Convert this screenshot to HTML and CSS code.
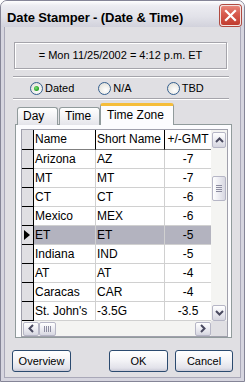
FILE: index.html
```html
<!DOCTYPE html>
<html>
<head>
<meta charset="utf-8">
<link rel="stylesheet" href="styles.css">
</head>
<body>
<div class="window">
  <div class="titlebar">
    <span class="title">Date Stamper - (Date &amp; Time)</span>
    <span class="close"><svg width="21" height="21" viewBox="0 0 21 21"><path d="M6 6 L15 15 M15 6 L6 15" stroke="#fff" stroke-width="2.2" stroke-linecap="square"/></svg></span>
  </div>
  <div class="client">
    <div class="display">= Mon 11/25/2002 = 4:12 p.m. ET</div>
    <div class="sep"></div>
    <div class="radios">
      <label class="radio r1"><span class="circle checked"></span>Dated</label>
      <label class="radio r2"><span class="circle"></span>N/A</label>
      <label class="radio r3"><span class="circle"></span>TBD</label>
    </div>
    <div class="sep sep2"></div>
    <div class="tabs">
      <div class="tab t-day">Day</div>
      <div class="tab t-time">Time</div>
      <div class="tab active">Time Zone</div>
    </div>
    <div class="panel">
      <div class="grid">
        <div class="gridmain">
          <div class="table">
            <div class="row head"><div class="rh"></div><div class="c">Name</div><div class="c">Short Name</div><div class="c ctr">+/-GMT</div></div>
            <div class="row"><div class="rh"></div><div class="c">Arizona</div><div class="c">AZ</div><div class="c ctr">-7</div></div>
            <div class="row"><div class="rh"></div><div class="c">MT</div><div class="c">MT</div><div class="c ctr">-7</div></div>
            <div class="row"><div class="rh"></div><div class="c">CT</div><div class="c">CT</div><div class="c ctr">-6</div></div>
            <div class="row"><div class="rh"></div><div class="c">Mexico</div><div class="c">MEX</div><div class="c ctr">-6</div></div>
            <div class="row sel"><div class="rh"><svg width="7" height="10" viewBox="0 0 7 10"><path d="M0 0 L6 5 L0 10 Z" fill="#000"/></svg></div><div class="c">ET</div><div class="c">ET</div><div class="c ctr">-5</div></div>
            <div class="row"><div class="rh"></div><div class="c">Indiana</div><div class="c">IND</div><div class="c ctr">-5</div></div>
            <div class="row"><div class="rh"></div><div class="c">AT</div><div class="c">AT</div><div class="c ctr">-4</div></div>
            <div class="row"><div class="rh"></div><div class="c">Caracas</div><div class="c">CAR</div><div class="c ctr">-4</div></div>
            <div class="row"><div class="rh"></div><div class="c">St. John's</div><div class="c">-3.5G</div><div class="c ctr">-3.5</div></div>
          </div>
          <div class="vscroll">
            <div class="sbtn"><svg width="9" height="6" viewBox="0 0 9 6"><path d="M1 5 L4.5 1.5 L8 5" fill="none" stroke="#4a4a60" stroke-width="2"/></svg></div>
            <div class="vtrack-a"></div>
            <div class="vthumb"><span class="grip-h"></span><span class="grip-h"></span><span class="grip-h"></span><span class="grip-h"></span></div>
            <div class="vtrack-b"></div>
            <div class="sbtn"><svg width="9" height="6" viewBox="0 0 9 6"><path d="M1 1 L4.5 4.5 L8 1" fill="none" stroke="#4a4a60" stroke-width="2"/></svg></div>
          </div>
        </div>
        <div class="gridbottom">
          <div class="hscroll">
            <div class="sbtn h"><svg width="6" height="9" viewBox="0 0 6 9"><path d="M5 1 L1.5 4.5 L5 8" fill="none" stroke="#4a4a60" stroke-width="2"/></svg></div>
            <div class="hthumb"><span class="grip-v"></span><span class="grip-v"></span><span class="grip-v"></span><span class="grip-v"></span></div>
            <div class="htrack"></div>
            <div class="sbtn h"><svg width="6" height="9" viewBox="0 0 6 9"><path d="M1 1 L4.5 4.5 L1 8" fill="none" stroke="#4a4a60" stroke-width="2"/></svg></div>
          </div>
          <div class="corner"></div>
        </div>
      </div>
    </div>
    <div class="buttons">
      <button class="btn b-over">Overview</button>
      <button class="btn b-ok">OK</button>
      <button class="btn b-cancel">Cancel</button>
    </div>
  </div>
</div>
</body>
</html>
```

FILE: styles.css
```css
* { box-sizing: border-box; }
body {
  margin: 0;
  font-family: "Liberation Sans", Arial, sans-serif;
  font-size: 11px;
  color: #000;
  background: #fff;
}
.window {
  width: 245px;
  height: 382px;
  border: 1px solid #858597;
  border-radius: 7px 7px 0 0;
  background: #E0DFE3;
  display: flex;
  flex-direction: column;
  overflow: hidden;
}
.titlebar {
  height: 26px;
  flex: none;
  display: flex;
  align-items: flex-start;
  justify-content: space-between;
  padding: 0 3px 0 6px;
  background: linear-gradient(to bottom, #ffffff 0%, #ececf1 18%, #e2e2e9 60%, #d2d2dc 100%);
}
.title {
  font-weight: bold;
  font-size: 13px;
  line-height: 15px;
  margin-top: 9px;
  color: #000;
  letter-spacing: -0.1px;
}
.close {
  width: 21px;
  height: 21px;
  margin-top: 4px;
  border-radius: 3px;
  border: 1px solid #f3e3e0;
  background: linear-gradient(to bottom, #e8867a 0%, #d85c4f 40%, #c13c2f 100%);
  display: flex;
  box-shadow: 0 0 0 1px #b04a40;
}
.close svg { margin: -1px; }
.client {
  flex: 1;
  border-left: 3px solid #d6d5df;
  border-right: 3px solid #d6d5df;
  border-bottom: 3px solid #d6d5df;
  box-shadow: inset 1px 0 0 #a9a8b8, inset -1px 0 0 #a9a8b8, inset 0 -1px 0 #a9a8b8;
  display: flex;
  flex-direction: column;
}
.display {
  margin: 15px 0 0 10px;
  width: 213px;
  height: 27px;
  border: 1px solid #a5a4ab;
  box-shadow: inset 1px 1px 0 #fff, 1px 1px 0 #fff;
  text-align: center;
  line-height: 25px;
  font-size: 11px;
}
.sep {
  margin: 7px 0 0 9px;
  width: 216px;
  height: 2px;
  border-top: 1px solid #a5a4ab;
  border-bottom: 1px solid #fff;
}
.sep2 { margin-top: 0; }
.radios {
  height: 20px;
  display: flex;
  align-items: center;
}
.radio {
  display: flex;
  align-items: center;
  gap: 2px;
  font-size: 11px;
}
.r1 { margin-left: 26px; }
.r2 { margin-left: 24px; }
.r3 { margin-left: 35px; }
.circle {
  width: 13px;
  height: 13px;
  border-radius: 50%;
  border: 1px solid #355f8f;
  background: radial-gradient(circle at 60% 65%, #ffffff 0%, #ecebe6 55%, #d6d5d0 100%);
  display: flex;
  align-items: center;
  justify-content: center;
}
.circle.checked::after {
  content: "";
  width: 5px;
  height: 5px;
  border-radius: 50%;
  background: radial-gradient(circle at 40% 40%, #7ee07a 0%, #2aa52a 60%, #1b7f1b 100%);
}
.tabs {
  display: flex;
  align-items: flex-end;
  margin: 2px 0 0 13px;
  height: 23px;
  position: relative;
  z-index: 1;
  margin-bottom: -1px;
}
.tab {
  height: 18px;
  border: 1px solid #919b9c;
  border-bottom: none;
  border-radius: 3px 3px 0 0;
  background: linear-gradient(to bottom, #ffffff 0%, #f3f3f5 50%, #e4e4ea 100%);
  font-size: 12px;
  line-height: 17px;
  padding-left: 5px;
}
.t-day { width: 41px; margin-right: 1px; }
.t-time { width: 41px; }
.tab.active {
  width: 74px;
  height: 22px;
  background: #fcfcfe;
  border-top: 3px solid #f5bd3a;
  padding-left: 6px;
  line-height: 18px;
}
.panel {
  margin-left: 11px;
  width: 217px;
  height: 214px;
  border: 1px solid #919b9c;
  background: #fcfcfe;
  padding: 4px 3px 1px 5px;
  flex: none;
}
.grid {
  border: 1px solid #a0a0ac;
  background: #fff;
  display: flex;
  flex-direction: column;
}
.gridmain { display: flex; }
.table { width: 189px; }
.row {
  display: grid;
  grid-template-columns: 12px 62px 69px 46px;
  height: 19px;
  font-size: 12px;
}
.row .c {
  border-right: 1px solid #d0d0d0;
  border-bottom: 1px solid #d0d0d0;
  padding-left: 1px;
  line-height: 18px;
  white-space: nowrap;
  overflow: hidden;
}
.row .c.ctr { text-align: center; padding-left: 0; border-right: none; }
.row .rh {
  background: #e0dfe3;
  border-right: 1px solid #000;
  border-bottom: 1px solid #000;
  display: flex;
  align-items: center;
  padding-left: 2px;
}
.row.head { height: 20px; }
.row.head .c {
  border-right: 1px solid #000;
  border-bottom: 1px solid #808080;
  line-height: 19px;
  background: #fff;
}
.row.head .c.ctr { border-right: none; }
.row.sel .c { background: #b3b3bf; }
.vscroll {
  width: 16px;
  background: #f4f4f2;
  display: flex;
  flex-direction: column;
  padding: 2px 1px 0 1px;
}
.sbtn {
  width: 14px;
  height: 16px;
  border: 1px solid #b6b6c6;
  border-radius: 2px;
  background: linear-gradient(to bottom, #ffffff 0%, #ececf2 50%, #d6d6e0 100%);
  display: flex;
  align-items: center;
  justify-content: center;
  flex: none;
}
.sbtn.h { width: 16px; height: 14px; }
.vtrack-a { height: 28px; }
.vthumb {
  height: 25px;
  border: 1px solid #b6b6c6;
  border-radius: 2px;
  background: linear-gradient(to right, #ffffff 0%, #ececf2 50%, #d8d8e2 100%);
  display: flex;
  flex-direction: column;
  align-items: center;
  justify-content: center;
  gap: 1px;
}
.grip-h { width: 6px; height: 1px; background: #8c8ca0; }
.vtrack-b { flex: 1; }
.gridbottom { display: flex; height: 15px; }
.hscroll {
  width: 189px;
  display: flex;
  align-items: center;
  background: #f4f4f2;
  padding: 0 0 0 1px;
}
.hthumb {
  width: 17px;
  height: 14px;
  border: 1px solid #b6b6c6;
  border-radius: 2px;
  background: linear-gradient(to bottom, #ffffff 0%, #ececf2 50%, #d8d8e2 100%);
  display: flex;
  align-items: center;
  justify-content: center;
  gap: 1px;
}
.grip-v { width: 1px; height: 6px; background: #8c8ca0; }
.htrack { flex: 1; }
.corner { width: 16px; background: #e0dfe3; }
.buttons {
  display: flex;
  margin-top: 12px;
  padding-left: 8px;
}
.btn {
  height: 22px;
  border: 1px solid #2b4a6f;
  border-radius: 3px;
  background: linear-gradient(to bottom, #ffffff 0%, #f4f4f7 45%, #e2e2ea 85%, #c9c9d6 100%);
  font-family: "Liberation Sans", Arial, sans-serif;
  font-size: 11px;
  color: #000;
  padding: 0;
}
.b-over { width: 59px; }
.b-ok { width: 59px; margin-left: 38px; }
.b-cancel { width: 58px; margin-left: 7px; }
```
